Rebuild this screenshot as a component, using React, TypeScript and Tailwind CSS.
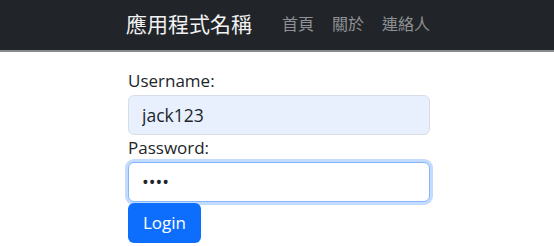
import { useState } from "react"

const FONT = "font-['Segoe_UI','Open_Sans','Noto_Sans_CJK_TC',sans-serif]"

export default function App() {
  const [username, setUsername] = useState("jack123")
  const [password, setPassword] = useState("1234")

  return (
    <div className={`min-h-screen bg-white ${FONT}`}>
      {/* navbar */}
      <nav className="h-[52px] bg-[#212529] border-b-2 border-[#8a8a8a] flex items-center pl-[126px] pb-[2px]">
        <span className="text-[21px] text-[#f2f2f2] mr-[21px] leading-none">應用程式名稱</span>
        <ul className="flex items-center text-[16px] text-[#8f9194] leading-none">
          <li className="px-[9px]">首頁</li>
          <li className="px-[9px]">關於</li>
          <li className="px-[9px]">連絡人</li>
        </ul>
      </nav>

      <form className="w-[302px] ml-[128px] pt-[17px] flex flex-col" onSubmit={(e) => e.preventDefault()}>
        <label className="text-[17px] text-[#212529] leading-[24px] h-[24px] mb-[2px]">Username:</label>
        <input
          value={username}
          onChange={(e) => setUsername(e.target.value)}
          className="h-[40px] rounded-[6px] border border-[#d7dde6] bg-[#e8f0fe] px-[13px] text-[17.5px] text-[#212529] outline-none"
        />
        <label className="text-[17px] text-[#212529] leading-[24px] h-[24px] mt-[1px] mb-[2px]">Password:</label>
        <input
          type="password"
          value={password}
          onChange={(e) => setPassword(e.target.value)}
          className="h-[40px] rounded-[6px] border border-[#86b7fe] bg-white px-[13px] text-[18px] text-[#212529] outline-none shadow-[0_0_0_3px_rgba(13,110,253,0.25)]"
        />
        <button
          type="submit"
          className="self-start mt-[1px] h-[40px] w-[73px] rounded-[6px] bg-[#0d6efd] text-white text-[17px]"
        >
          Login
        </button>
      </form>
    </div>
  )
}
